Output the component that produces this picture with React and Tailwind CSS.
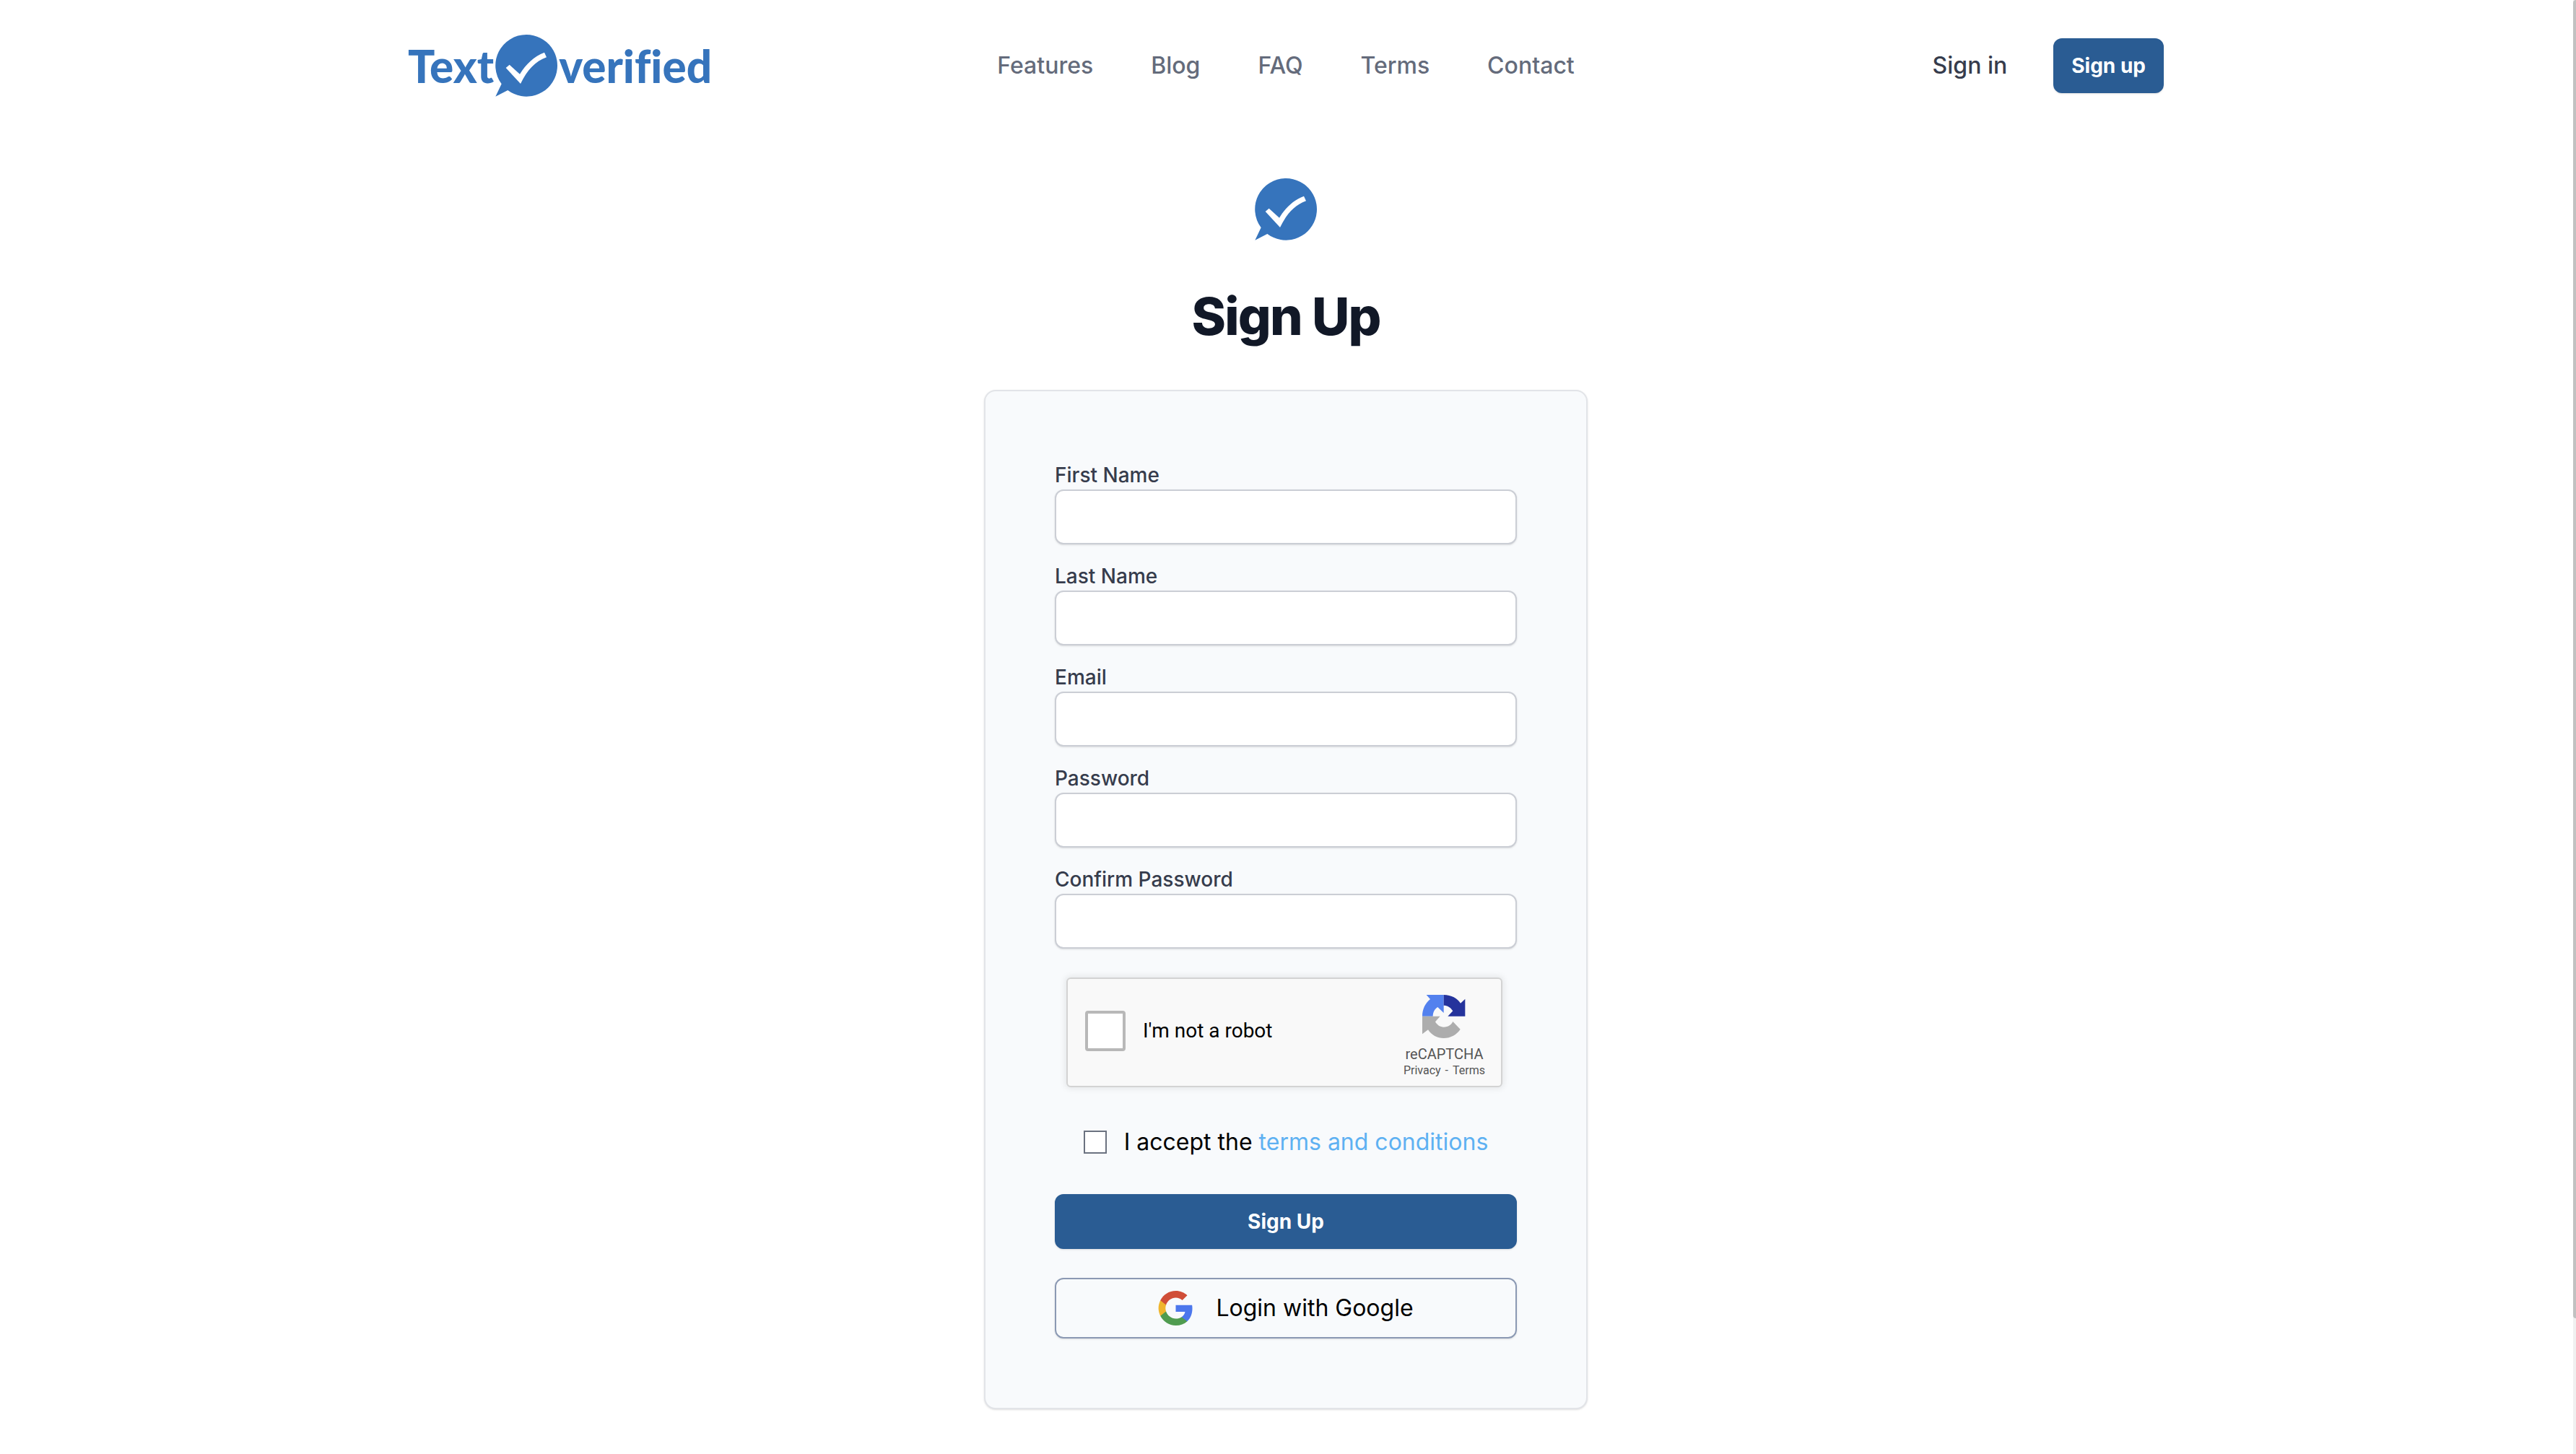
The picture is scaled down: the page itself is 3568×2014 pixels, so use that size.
import React from "react";

const NAV_ITEMS = ["Features", "Blog", "FAQ", "Terms", "Contact"];

const FIELDS = [
  { id: "first-name", label: "First Name", type: "text" },
  { id: "last-name", label: "Last Name", type: "text" },
  { id: "email", label: "Email", type: "email" },
  { id: "password", label: "Password", type: "password" },
  { id: "confirm-password", label: "Confirm Password", type: "password" },
];

function Bubble() {
  return (
    <svg className="size-[86px] shrink-0" viewBox="435 84 258 258" aria-hidden="true">
      <path
        fill="#3674bc"
        d="M564 84a128.500 128.500 0 1 1-77 231L436 341L461 289A128.500 128.500 0 0 1 564 84Z"
      />
      <path
        fill="#fff"
        d="M479 222L494 209L537 248C562 207 596 174 639 158L648 178C600 196 568 231 540 288Z"
      />
    </svg>
  );
}

function RecaptchaLogo() {
  return (
    <svg className="size-15" viewBox="154 55 180 180" aria-hidden="true">
      <path fill="#5381ee" d="M243 55H171L187 73C166 90 154 115 154 144H198C198 127 206 113 218 106L243 130Z" />
      <path fill="#25339c" d="M243 55C275 55 300 70 313 90L332 72V144H260L281 122C272 107 258 99 243 99Z" />
      <path
        fill="#adadad"
        d="M154 144H228L208 167C216 181 228 189 243 189C262 189 274 180 281 166L312 198C297 220 272 235 243 235C216 235 193 223 178 200L154 218Z"
      />
    </svg>
  );
}

function GoogleLogo() {
  return (
    <svg className="size-12" viewBox="0 0 48 48" aria-hidden="true">
      <path fill="#4c77ec" d="M47.500 24.500c0-1.600-.1-3.200-.4-4.700H24.500v9.200h13c-.6 3-2.200 5.500-4.800 7.200v6h7.700c4.600-4.200 7.100-10.400 7.100-17.700z" />
      <path fill="#509c50" d="M24.500 48c6.500 0 11.900-2.100 15.900-5.800l-7.700-6c-2.200 1.400-4.900 2.300-8.200 2.300-6.200 0-11.500-4.200-13.400-9.900H3.200v6.200C7.200 42.600 15.200 48 24.500 48z" />
      <path fill="#efb52e" d="M11.100 28.600c-.5-1.400-.8-3-.8-4.600s.3-3.200.8-4.600v-6.200H3.200C1.600 16.500.6 20.100.6 24s1 7.500 2.600 10.800z" />
      <path fill="#d04e38" d="M24.500 9.500c3.500 0 6.700 1.200 9.100 3.600l6.900-6.900C36.300 2.400 30.900 0 24.500 0 15.200 0 7.200 5.400 3.200 13.200l7.900 6.200c1.900-5.700 7.200-9.900 13.400-9.900z" />
    </svg>
  );
}

function Header() {
  return (
    <header className="mx-auto flex w-full max-w-[2560px] items-center px-16 py-12">
      <div className="flex flex-1">
        <a
          href="#home"
          className="flex items-center gap-[2px] font-['Lato',sans-serif] text-[62px] leading-[80px] font-black text-[#3674bc] [font-variant-ligatures:none]"
        >
          <span>Text</span>
          <Bubble />
          <span>verified</span>
        </a>
      </div>
      <nav className="flex gap-20 text-[32px] leading-12 font-medium text-[#646b7b]">
        {NAV_ITEMS.map((item) => (
          <a key={item} href={"#" + item.toLowerCase()}>
            {item}
          </a>
        ))}
      </nav>
      <div className="flex flex-1 items-center justify-end gap-16">
        <a href="#sign-in" className="text-[32px] leading-12 font-medium text-[#363c4c]">
          Sign in
        </a>
        <a
          href="#sign-up"
          className="rounded-xl border-2 border-[#2a5c93] bg-[#2a5c93] px-[23px] py-4 text-[28px] leading-10 font-bold text-white shadow-sm"
        >
          Sign up
        </a>
      </div>
    </header>
  );
}

function Recaptcha() {
  return (
    <div className="mt-10 mr-5 ml-4 flex justify-between rounded-md border-2 border-[#d3d3d3] bg-[#f9f9f9] pr-[22px] pl-6 font-['Roboto',sans-serif] shadow-[0_0_8px_2px_rgba(0,0,0,0.08)]">
      <div className="flex items-center gap-6 pb-1">
        <input
          id="robot"
          type="checkbox"
          className="size-14 appearance-none rounded-sm border-4 border-[#b8b8b8] bg-white"
        />
        <label htmlFor="robot" className="text-[28px] leading-9 text-black">
          I'm not a robot
        </label>
      </div>
      <div className="flex flex-col items-center pt-[22px] pb-[10px] text-[#555555]">
        <RecaptchaLogo />
        <span className="mt-[10px] text-[20px] leading-6">reCAPTCHA</span>
        <span className="flex gap-[6px] text-[16px] leading-[22px]">
          <a href="#privacy">Privacy</a>
          <span>-</span>
          <a href="#captcha-terms">Terms</a>
        </span>
      </div>
    </div>
  );
}

function SignUpForm() {
  return (
    <form className="w-full max-w-[836px] rounded-2xl border-2 border-[#e2e4e8] bg-[#f8fafc] p-24 shadow-sm">
      <div className="flex flex-col gap-6">
        {FIELDS.map((field) => (
          <div key={field.id} className="flex flex-col">
            <label htmlFor={field.id} className="text-[28px] leading-10 font-medium text-[#363c4c]">
              {field.label}
            </label>
            <input
              id={field.id}
              type={field.type}
              className="h-[76px] w-full rounded-xl border-2 border-[#cbced5] bg-white px-6 text-[28px] shadow-sm"
            />
          </div>
        ))}
      </div>

      <Recaptcha />

      <div className="mt-[52px] flex items-center justify-center gap-6 text-[32px] leading-12 text-black">
        <input
          id="accept"
          type="checkbox"
          className="size-8 appearance-none border-2 border-[#6b7280] bg-white"
        />
        <label htmlFor="accept">
          I accept the{" "}
          <a href="#terms" className="text-[#5eb1f2]">
            terms and conditions
          </a>
        </label>
      </div>

      <button
        type="submit"
        className="mt-12 w-full rounded-xl border-2 border-[#2a5c93] bg-[#2a5c93] py-4 text-[28px] leading-10 font-bold text-white shadow-sm"
      >
        Sign Up
      </button>

      <button
        type="button"
        className="mt-10 flex w-full items-center justify-center gap-8 rounded-xl border-2 border-[#8b99b3] py-4 text-[32px] leading-12 text-black shadow-sm"
      >
        <GoogleLogo />
        Login with Google
      </button>
    </form>
  );
}

export default function App() {
  return (
    <div className="flex min-h-screen bg-white font-['Inter',sans-serif]">
      <div className="flex flex-1 flex-col">
        <Header />
        <main className="flex flex-col items-center pt-[65px]">
          <Bubble />
          <h1 className="mt-[65px] text-[72px] leading-20 font-extrabold tracking-tight text-[#111827]">
            Sign Up
          </h1>
          <div className="mt-[62px] flex w-full justify-center">
            <SignUpForm />
          </div>
        </main>
      </div>
      <div className="flex w-[6px] flex-col pl-[2px]" aria-hidden="true">
        <div className="flex flex-1 flex-col bg-[#f0f0f0]">
          <div className="h-[1826px] rounded-l bg-[#c1c1c1]" />
        </div>
      </div>
    </div>
  );
}
